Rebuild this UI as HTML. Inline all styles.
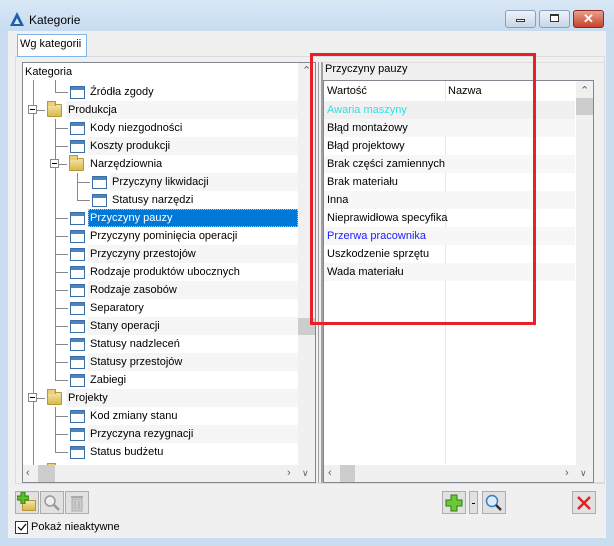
<!DOCTYPE html>
<html><head><meta charset="utf-8"><style>
*{margin:0;padding:0;box-sizing:border-box}
body{width:614px;height:546px;overflow:hidden;background:#c9dcf0;font-family:"Liberation Sans",sans-serif;font-size:11px;color:#000;position:relative}
.a{position:absolute}
.t{position:absolute;white-space:nowrap;line-height:18px;height:18px}
.ic{position:absolute;width:15px;height:13px;border:1px solid #3a6ea5;background:#fff}
.ic:before{content:"";position:absolute;left:0;top:0;right:0;height:3px;background:#4a86c5}
.fd{position:absolute;width:15px;height:13px;background:linear-gradient(#f3e3a0,#d8b950);border:1px solid #b8973a;border-radius:1px}
.fd:before{content:"";position:absolute;left:-1px;top:-4px;width:7px;height:4px;background:#e8d078;border:1px solid #b8973a;border-bottom:none}
.ex{position:absolute;width:9px;height:9px;border:1px solid #888;background:#fff}
.ex:after{content:"";position:absolute;left:1px;top:3px;width:5px;height:1px;background:#000}
.vl{position:absolute;width:1px;background:#888}
.hl{position:absolute;height:1px;background:#888}
.sh{position:absolute;height:18px;background:#f5f5f5}
.btn{position:absolute;width:24px;height:23px;border:1px solid #adadad;background:#e1e1e1}
</style></head><body>
<!-- title bar -->
<div class="a" style="left:0;top:0;width:614px;height:31px;background:linear-gradient(#dae8f6,#c7dbf0)"></div>
<svg class="a" style="left:9px;top:11px" width="16" height="16"><polygon points="8,1 15,15 1,15" fill="#1e5fa8"/><polygon points="8,7 11,13 5,13" fill="#dae8f6"/></svg>
<div class="t" style="left:29px;top:11px;font-size:12px">Kategorie</div>
<div class="a" style="left:505px;top:10px;width:31px;height:18px;border:1px solid #8a9fb8;border-radius:3px;background:linear-gradient(#eef3f9,#c8d6e6)"></div>
<div class="a" style="left:516px;top:19px;width:9px;height:3px;border:1px solid #333;background:#fff"></div>
<div class="a" style="left:539px;top:10px;width:31px;height:18px;border:1px solid #8a9fb8;border-radius:3px;background:linear-gradient(#eef3f9,#c8d6e6)"></div>
<div class="a" style="left:550px;top:14px;width:9px;height:8px;border:1px solid #333;border-top-width:2px;background:#fff"></div>
<div class="a" style="left:573px;top:10px;width:31px;height:18px;border:1px solid #8b2a1e;border-radius:3px;background:linear-gradient(#e8a08f,#c7422c)"></div>
<div class="t" style="left:583px;top:10px;color:#fff;font-weight:bold;font-size:13px">✕</div>
<!-- client -->
<div class="a" style="left:8px;top:31px;width:598px;height:507px;background:#f0f0f0"></div>
<div class="a" style="left:15px;top:56px;width:590px;height:428px;border:1px solid #dcdcdc;background:#f0f0f0"></div>
<div class="a" style="left:17px;top:34px;width:70px;height:23px;border:1px solid #7eb4ea;background:#fff"></div>
<div class="t" style="left:20px;top:35px">Wg kategorii</div>
<!-- tree -->
<div class="a" style="left:22px;top:62px;width:294px;height:421px;border:1px solid #828790;background:#fff"></div>
<div class="t" style="left:25px;top:63px">Kategoria</div>
<div class="sh" style="left:66px;top:101px;width:232px"></div>
<div class="sh" style="left:88px;top:137px;width:210px"></div>
<div class="sh" style="left:110px;top:173px;width:188px"></div>
<div class="sh" style="left:88px;top:245px;width:210px"></div>
<div class="sh" style="left:88px;top:281px;width:210px"></div>
<div class="sh" style="left:88px;top:317px;width:210px"></div>
<div class="sh" style="left:88px;top:353px;width:210px"></div>
<div class="sh" style="left:66px;top:389px;width:232px"></div>
<div class="sh" style="left:88px;top:425px;width:210px"></div>
<div class="a" style="left:88px;top:209px;width:210px;height:18px;background:#0078d7;border:1px dotted #9cf"></div>
<div class="vl" style="left:33px;top:80px;height:386px"></div>
<div class="vl" style="left:55px;top:80px;height:12px"></div>
<div class="vl" style="left:55px;top:119px;height:261px"></div>
<div class="vl" style="left:55px;top:407px;height:45px"></div>
<div class="vl" style="left:77px;top:173px;height:27px"></div>
<div class="hl" style="left:55px;top:92px;width:13px"></div>
<div class="hl" style="left:33px;top:110px;width:12px"></div>
<div class="hl" style="left:33px;top:398px;width:12px"></div>
<div class="hl" style="left:55px;top:164px;width:12px"></div>
<div class="hl" style="left:77px;top:182px;width:13px"></div>
<div class="hl" style="left:77px;top:200px;width:13px"></div>
<div class="hl" style="left:55px;top:128px;width:13px"></div><div class="hl" style="left:55px;top:146px;width:13px"></div>
<div class="hl" style="left:55px;top:218px;width:13px"></div><div class="hl" style="left:55px;top:236px;width:13px"></div>
<div class="hl" style="left:55px;top:254px;width:13px"></div><div class="hl" style="left:55px;top:272px;width:13px"></div>
<div class="hl" style="left:55px;top:290px;width:13px"></div><div class="hl" style="left:55px;top:308px;width:13px"></div>
<div class="hl" style="left:55px;top:326px;width:13px"></div><div class="hl" style="left:55px;top:344px;width:13px"></div>
<div class="hl" style="left:55px;top:362px;width:13px"></div><div class="hl" style="left:55px;top:380px;width:13px"></div>
<div class="hl" style="left:55px;top:416px;width:13px"></div><div class="hl" style="left:55px;top:434px;width:13px"></div>
<div class="hl" style="left:55px;top:452px;width:13px"></div>
<div class="ex" style="left:28px;top:105px"></div>
<div class="ex" style="left:28px;top:393px"></div>
<div class="ex" style="left:50px;top:159px"></div>
<div class="fd" style="left:47px;top:104px"></div>
<div class="fd" style="left:47px;top:392px"></div>
<div class="fd" style="left:69px;top:158px"></div>
<div class="fd" style="left:47px;top:466px;height:6px"></div>
<div class="ic" style="left:70px;top:86px"></div>
<div class="ic" style="left:70px;top:122px"></div><div class="ic" style="left:70px;top:140px"></div>
<div class="ic" style="left:92px;top:176px"></div><div class="ic" style="left:92px;top:194px"></div>
<div class="ic" style="left:70px;top:212px"></div><div class="ic" style="left:70px;top:230px"></div>
<div class="ic" style="left:70px;top:248px"></div><div class="ic" style="left:70px;top:266px"></div>
<div class="ic" style="left:70px;top:284px"></div><div class="ic" style="left:70px;top:302px"></div>
<div class="ic" style="left:70px;top:320px"></div><div class="ic" style="left:70px;top:338px"></div>
<div class="ic" style="left:70px;top:356px"></div><div class="ic" style="left:70px;top:374px"></div>
<div class="ic" style="left:70px;top:410px"></div><div class="ic" style="left:70px;top:428px"></div>
<div class="ic" style="left:70px;top:446px"></div>
<div class="t" style="left:90px;top:83px">Źródła zgody</div>
<div class="t" style="left:68px;top:101px">Produkcja</div>
<div class="t" style="left:90px;top:119px">Kody niezgodności</div>
<div class="t" style="left:90px;top:137px">Koszty produkcji</div>
<div class="t" style="left:90px;top:155px">Narzędziownia</div>
<div class="t" style="left:112px;top:173px">Przyczyny likwidacji</div>
<div class="t" style="left:112px;top:191px">Statusy narzędzi</div>
<div class="t" style="left:90px;top:209px;color:#fff">Przyczyny pauzy</div>
<div class="t" style="left:90px;top:227px">Przyczyny pominięcia operacji</div>
<div class="t" style="left:90px;top:245px">Przyczyny przestojów</div>
<div class="t" style="left:90px;top:263px">Rodzaje produktów ubocznych</div>
<div class="t" style="left:90px;top:281px">Rodzaje zasobów</div>
<div class="t" style="left:90px;top:299px">Separatory</div>
<div class="t" style="left:90px;top:317px">Stany operacji</div>
<div class="t" style="left:90px;top:335px">Statusy nadzleceń</div>
<div class="t" style="left:90px;top:353px">Statusy przestojów</div>
<div class="t" style="left:90px;top:371px">Zabiegi</div>
<div class="t" style="left:68px;top:389px">Projekty</div>
<div class="t" style="left:90px;top:407px">Kod zmiany stanu</div>
<div class="t" style="left:90px;top:425px">Przyczyna rezygnacji</div>
<div class="t" style="left:90px;top:443px">Status budżetu</div>
<!-- tree scrollbars -->
<div class="a" style="left:298px;top:63px;width:17px;height:419px;background:#f0f0f0"></div>
<div class="a" style="left:298px;top:318px;width:17px;height:17px;background:#cdcdcd"></div>
<div class="t" style="left:302px;top:62px;color:#606060">⌃</div>
<div class="a" style="left:23px;top:465px;width:275px;height:17px;background:#f0f0f0"></div>
<div class="a" style="left:38px;top:465px;width:17px;height:17px;background:#cdcdcd"></div>
<div class="t" style="left:26px;top:464px;color:#606060">‹</div>
<div class="t" style="left:287px;top:464px;color:#606060">›</div>
<div class="t" style="left:302px;top:464px;color:#606060;font-size:9px">∨</div>
<!-- splitter -->
<div class="a" style="left:318px;top:62px;width:1px;height:421px;background:#a0a0a0"></div>
<div class="a" style="left:321px;top:62px;width:1px;height:421px;background:#a0a0a0"></div>
<!-- right panel -->
<div class="a" style="left:322px;top:62px;width:283px;height:421px;border:1px solid #dcdcdc;border-left:1px solid #a0a0a0"></div>
<div class="t" style="left:325px;top:60px">Przyczyny pauzy</div>
<div class="a" style="left:323px;top:80px;width:271px;height:403px;border:1px solid #828790;background:#fff"></div>
<div class="a" style="left:445px;top:81px;width:1px;height:383px;background:#e8e8e8"></div>
<div class="t" style="left:327px;top:82px">Wartość</div>
<div class="t" style="left:448px;top:82px">Nazwa</div>
<div class="a" style="left:324px;top:101px;width:251px;height:18px;background:#f0f0f0"></div>
<div class="sh" style="left:324px;top:119px;width:251px;background:#f7f7f7"></div>
<div class="sh" style="left:324px;top:155px;width:251px;background:#f7f7f7"></div>
<div class="sh" style="left:324px;top:191px;width:251px;background:#f7f7f7"></div>
<div class="sh" style="left:324px;top:227px;width:251px;background:#f7f7f7"></div>
<div class="sh" style="left:324px;top:263px;width:251px;background:#f7f7f7"></div>
<div class="t" style="left:327px;top:101px;color:#30e0e8">Awaria maszyny</div>
<div class="t" style="left:327px;top:119px">Błąd montażowy</div>
<div class="t" style="left:327px;top:137px">Błąd projektowy</div>
<div class="t" style="left:327px;top:155px">Brak części zamiennych</div>
<div class="t" style="left:327px;top:173px">Brak materiału</div>
<div class="t" style="left:327px;top:191px">Inna</div>
<div class="t" style="left:327px;top:209px">Nieprawidłowa specyfika</div>
<div class="t" style="left:327px;top:227px;color:#2020ff">Przerwa pracownika</div>
<div class="t" style="left:327px;top:245px">Uszkodzenie sprzętu</div>
<div class="t" style="left:327px;top:263px">Wada materiału</div>
<div class="a" style="left:576px;top:81px;width:17px;height:401px;background:#f0f0f0"></div>
<div class="a" style="left:576px;top:98px;width:17px;height:17px;background:#cdcdcd"></div>
<div class="t" style="left:580px;top:82px;color:#606060">⌃</div>
<div class="a" style="left:324px;top:465px;width:252px;height:17px;background:#f0f0f0"></div>
<div class="a" style="left:340px;top:465px;width:15px;height:17px;background:#cdcdcd"></div>
<div class="t" style="left:328px;top:464px;color:#606060">‹</div>
<div class="t" style="left:565px;top:464px;color:#606060">›</div>
<div class="t" style="left:580px;top:464px;color:#606060;font-size:9px">∨</div>
<!-- red rectangle -->
<div class="a" style="left:310px;top:53px;width:226px;height:272px;border:3px solid #e8202a"></div>
<!-- bottom buttons -->
<div class="btn" style="left:15px;top:491px"></div>
<div class="a" style="left:22px;top:500px;width:14px;height:11px;background:linear-gradient(#f3e3a0,#d8b950);border:1px solid #b8973a"></div>
<svg class="a" style="left:17px;top:492px" width="12" height="12"><path d="M4 0h4v4h4v4h-4v4h-4v-4h-4v-4h4z" fill="#5cbf2a" stroke="#2f7a12"/></svg>
<div class="btn" style="left:40px;top:491px"></div>
<svg class="a" style="left:43px;top:494px" width="18" height="18"><circle cx="7" cy="7" r="5" fill="#eee" stroke="#999" stroke-width="1.5"/><path d="M11 11l5 5" stroke="#999" stroke-width="2.5"/></svg>
<div class="btn" style="left:65px;top:491px"></div>
<svg class="a" style="left:70px;top:494px" width="14" height="18"><rect x="1" y="2" width="12" height="2" fill="#aaa"/><rect x="2" y="5" width="10" height="12" fill="#ccc" stroke="#aaa"/><path d="M5 7v8M9 7v8" stroke="#aaa"/></svg>
<div class="btn" style="left:442px;top:491px"></div>
<svg class="a" style="left:445px;top:494px" width="18" height="18"><path d="M6 1h6v5h5v6h-5v5h-6v-5h-5v-6h5z" fill="#6cc838" stroke="#2f7a12"/></svg>
<div class="a" style="left:469px;top:491px;width:9px;height:23px;border:1px solid #adadad;background:#e1e1e1"></div>
<div class="a" style="left:472px;top:503px;width:3px;height:1px;background:#000"></div>
<div class="btn" style="left:482px;top:491px"></div>
<svg class="a" style="left:485px;top:494px" width="18" height="18"><circle cx="7" cy="7" r="5.5" fill="#d8ecfb" stroke="#3a7cc0" stroke-width="1.5"/><path d="M11 11l5 5" stroke="#333" stroke-width="2.5"/></svg>
<div class="btn" style="left:572px;top:491px"></div>
<svg class="a" style="left:576px;top:495px" width="16" height="16"><path d="M2 2l12 12M14 2l-12 12" stroke="#e82020" stroke-width="2.5"/></svg>
<!-- checkbox -->
<div class="a" style="left:15px;top:521px;width:13px;height:13px;border:1px solid #333;background:#fff"></div>
<svg class="a" style="left:16px;top:522px" width="11" height="11"><path d="M2 5l3 3 5-6" stroke="#000" stroke-width="1.2" fill="none"/></svg>
<div class="t" style="left:31px;top:518px">Pokaż nieaktywne</div>
</body></html>
